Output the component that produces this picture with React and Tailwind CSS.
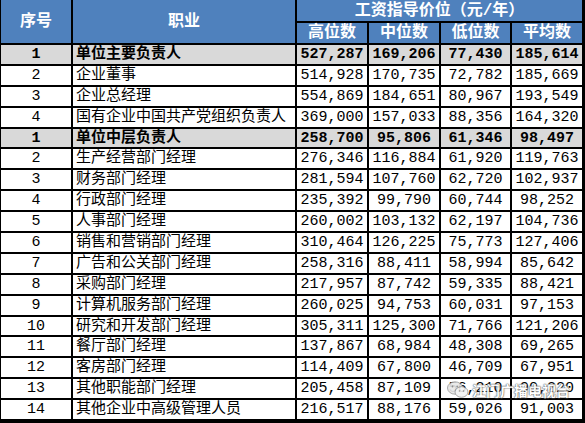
import React from 'react';

const rows = [
  { no: '1', job: '单位主要负责人', v: ['527,287', '169,206', '77,430', '185,614'], head: true },
  { no: '2', job: '企业董事', v: ['514,928', '170,735', '72,782', '185,669'] },
  { no: '3', job: '企业总经理', v: ['554,869', '184,651', '80,967', '193,549'] },
  { no: '4', job: '国有企业中国共产党组织负责人', v: ['369,000', '157,033', '88,356', '164,320'] },
  { no: '1', job: '单位中层负责人', v: ['258,700', '95,806', '61,346', '98,497'], head: true },
  { no: '2', job: '生产经营部门经理', v: ['276,346', '116,884', '61,920', '119,763'] },
  { no: '3', job: '财务部门经理', v: ['281,594', '107,760', '62,720', '102,937'] },
  { no: '4', job: '行政部门经理', v: ['235,392', '99,790', '60,744', '98,252'] },
  { no: '5', job: '人事部门经理', v: ['260,002', '103,132', '62,197', '104,736'] },
  { no: '6', job: '销售和营销部门经理', v: ['310,464', '126,225', '75,773', '127,406'] },
  { no: '7', job: '广告和公关部门经理', v: ['258,316', '88,411', '58,994', '85,642'] },
  { no: '8', job: '采购部门经理', v: ['217,957', '87,742', '59,335', '88,421'] },
  { no: '9', job: '计算机服务部门经理', v: ['260,025', '94,753', '60,031', '97,153'] },
  { no: '10', job: '研究和开发部门经理', v: ['305,311', '125,300', '71,766', '121,206'] },
  { no: '11', job: '餐厅部门经理', v: ['137,867', '68,984', '48,308', '69,265'] },
  { no: '12', job: '客房部门经理', v: ['114,409', '67,800', '46,709', '67,951'] },
  { no: '13', job: '其他职能部门经理', v: ['205,458', '87,109', '56,210', '90,220'] },
  { no: '14', job: '其他企业中高级管理人员', v: ['216,517', '88,176', '59,026', '91,003'] },
];

const App = () => {
  return (
    <div className="relative w-[585px] h-[423px] overflow-hidden bg-black font-['Liberation_Mono','Noto_Sans_CJK_SC',monospace] text-[15px] leading-none">
      <div className="grid grid-cols-[70px_222px_70px_70px_69px_70px] grid-rows-[21px_20px_repeat(18,18.9px)] gap-[2px] pl-[1px] pr-[3px]">
        {/* header */}
        <div className="row-span-2 bg-[#4f81bd] text-white text-[16px] font-bold flex items-center justify-center">序号</div>
        <div className="row-span-2 bg-[#4f81bd] text-white text-[16px] font-bold flex items-center justify-center">职业</div>
        <div className="col-span-4 bg-[#4f81bd] text-white text-[16px] font-bold flex items-center justify-center">工资指导价位（元/年）</div>
        <div className="bg-[#4f81bd] text-white text-[16px] font-bold flex items-center justify-center">高位数</div>
        <div className="bg-[#4f81bd] text-white text-[16px] font-bold flex items-center justify-center">中位数</div>
        <div className="bg-[#4f81bd] text-white text-[16px] font-bold flex items-center justify-center">低位数</div>
        <div className="bg-[#4f81bd] text-white text-[16px] font-bold flex items-center justify-center">平均数</div>

        {/* body */}
        {rows.map((r, i) => (
          <React.Fragment key={i}>
            <div className={`${r.head ? 'bg-[#d9d9d9] font-bold' : 'bg-white'} text-black flex items-center justify-center`}>{r.no}</div>
            <div className={`${r.head ? 'bg-[#d9d9d9] font-bold' : 'bg-white'} text-black flex items-center pl-[3px] whitespace-nowrap`}>{r.job}</div>
            {r.v.map((n, j) => (
              <div key={j} className={`${r.head ? 'bg-[#d9d9d9] font-bold' : 'bg-white'} text-black flex items-center justify-center`}>{n}</div>
            ))}
          </React.Fragment>
        ))}
      </div>

      {/* watermark */}
      <div className="absolute left-[447px] top-[381px] flex items-center gap-[3px] opacity-90">
        <svg width="22" height="18" viewBox="0 0 22 18">
          <ellipse cx="8" cy="7" rx="7.5" ry="6.2" fill="#e8e8e8" stroke="#8a8a8a" strokeWidth="0.8" />
          <ellipse cx="14.5" cy="11" rx="6.5" ry="5.3" fill="#f2f2f2" stroke="#8a8a8a" strokeWidth="0.8" />
          <circle cx="5.5" cy="5.5" r="0.9" fill="#8a8a8a" />
          <circle cx="10.2" cy="5.5" r="0.9" fill="#8a8a8a" />
          <circle cx="12.5" cy="10" r="0.8" fill="#8a8a8a" />
          <circle cx="16.5" cy="10" r="0.8" fill="#8a8a8a" />
        </svg>
        <span className="font-['Noto_Sans_CJK_SC',sans-serif] text-[14px] font-bold text-white [text-shadow:0_0_1px_#555,0_0_1px_#555,0_0_2px_#888]">江门广播电视台</span>
      </div>
    </div>
  );
};

export default App;
